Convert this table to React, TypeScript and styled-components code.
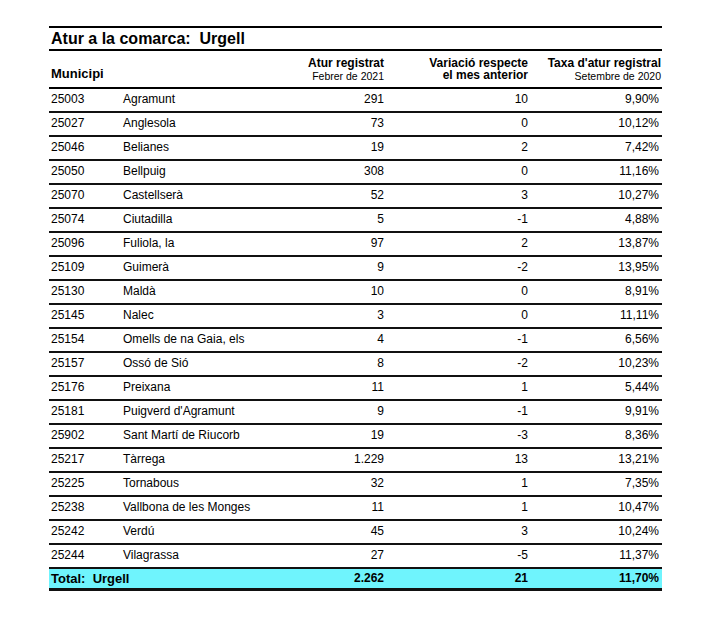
import React from "react";
import styled, { createGlobalStyle } from "styled-components";

const Global = createGlobalStyle`
  html, body { margin: 0; padding: 0; background: #fff; }
  body { font-family: "Liberation Sans", Arial, sans-serif; color: #000; }
`;

const Page = styled.div`
  padding: 26px 0 0 49px;
`;

const Report = styled.div`
  width: 613px;
`;

const TitleBar = styled.div`
  border-top: 2px solid #000;
  border-bottom: 2px solid #000;
  padding: 1px 0 0 2px;
  height: 20px;
  font-size: 16px;
  line-height: 20px;
  font-weight: bold;
  white-space: pre;
`;

const COLS = "74px 177px 84px 144px 134px";

const HeaderRow = styled.div`
  display: grid;
  grid-template-columns: ${COLS};
  height: 36px;
  border-bottom: 2px solid #000;
`;

const HeadCell = styled.div<{ $right?: boolean; $pb?: number; $pr?: number }>`
  display: flex;
  flex-direction: column;
  justify-content: flex-end;
  align-items: ${(p) => (p.$right ? "flex-end" : "flex-start")};
  text-align: ${(p) => (p.$right ? "right" : "left")};
  padding: 0 ${(p) => p.$pr ?? 0}px ${(p) => p.$pb ?? 6}px ${(p) => (p.$right ? 0 : 2)}px;
`;

const HeadMain = styled.div<{ $big?: boolean }>`
  font-size: ${(p) => (p.$big ? "13px" : "12px")};
  line-height: 12px;
  font-weight: bold;
  white-space: nowrap;
`;

const HeadSub = styled.div`
  font-size: 10.5px;
  line-height: 12px;
  margin-top: 1px;
  white-space: nowrap;
`;

const Row = styled.div<{ $total?: boolean }>`
  display: grid;
  grid-template-columns: ${COLS};
  height: ${(p) => (p.$total ? "19px" : "22px")};
  border-bottom: ${(p) => (p.$total ? "3px" : "2px")} solid #111;
  background: ${(p) => (p.$total ? "#6ff4fd" : "transparent")};
  font-size: 12px;
  line-height: ${(p) => (p.$total ? "19px" : "20px")};
  font-weight: ${(p) => (p.$total ? "bold" : "normal")};
`;

const Cell = styled.div<{ $right?: boolean; $span?: number }>`
  padding: ${(p) => (p.$right ? "0" : "0 0 0 2px")};
  text-align: ${(p) => (p.$right ? "right" : "left")};
  white-space: pre;
  grid-column: ${(p) => (p.$span ? `span ${p.$span}` : "auto")};
`;

const NameCell = styled(Cell)`
  padding-left: 0;
`;

const RateCell = styled(Cell)`
  padding-right: 3px;
`;

const TotalLabel = styled(Cell)`
  font-size: 13px;
`;

type R = [string, string, string, string, string];

const rows: R[] = [
  ["25003", "Agramunt", "291", "10", "9,90%"],
  ["25027", "Anglesola", "73", "0", "10,12%"],
  ["25046", "Belianes", "19", "2", "7,42%"],
  ["25050", "Bellpuig", "308", "0", "11,16%"],
  ["25070", "Castellserà", "52", "3", "10,27%"],
  ["25074", "Ciutadilla", "5", "-1", "4,88%"],
  ["25096", "Fuliola, la", "97", "2", "13,87%"],
  ["25109", "Guimerà", "9", "-2", "13,95%"],
  ["25130", "Maldà", "10", "0", "8,91%"],
  ["25145", "Nalec", "3", "0", "11,11%"],
  ["25154", "Omells de na Gaia, els", "4", "-1", "6,56%"],
  ["25157", "Ossó de Sió", "8", "-2", "10,23%"],
  ["25176", "Preixana", "11", "1", "5,44%"],
  ["25181", "Puigverd d'Agramunt", "9", "-1", "9,91%"],
  ["25902", "Sant Martí de Riucorb", "19", "-3", "8,36%"],
  ["25217", "Tàrrega", "1.229", "13", "13,21%"],
  ["25225", "Tornabous", "32", "1", "7,35%"],
  ["25238", "Vallbona de les Monges", "11", "1", "10,47%"],
  ["25242", "Verdú", "45", "3", "10,24%"],
  ["25244", "Vilagrassa", "27", "-5", "11,37%"],
];

export default function App() {
  return (
    <Page>
      <Global />
      <Report>
        <TitleBar>{"Atur a la comarca:  Urgell"}</TitleBar>
        <HeaderRow>
          <HeadCell $pb={7}>
            <HeadMain $big>Municipi</HeadMain>
          </HeadCell>
          <HeadCell />
          <HeadCell $right $pb={5}>
            <HeadMain>Atur registrat</HeadMain>
            <HeadSub>Febrer de 2021</HeadSub>
          </HeadCell>
          <HeadCell $right $pb={6}>
            <HeadMain>Variació respecte</HeadMain>
            <HeadMain>el mes anterior</HeadMain>
          </HeadCell>
          <HeadCell $right $pb={5} $pr={1}>
            <HeadMain>Taxa d'atur registral</HeadMain>
            <HeadSub>Setembre de 2020</HeadSub>
          </HeadCell>
        </HeaderRow>
        {rows.map((r) => (
          <Row key={r[0]}>
            <Cell>{r[0]}</Cell>
            <NameCell>{r[1]}</NameCell>
            <Cell $right>{r[2]}</Cell>
            <Cell $right>{r[3]}</Cell>
            <RateCell $right>{r[4]}</RateCell>
          </Row>
        ))}
        <Row $total>
          <TotalLabel $span={2}>{"Total:  Urgell"}</TotalLabel>
          <Cell $right>2.262</Cell>
          <Cell $right>21</Cell>
          <RateCell $right>11,70%</RateCell>
        </Row>
      </Report>
    </Page>
  );
}
